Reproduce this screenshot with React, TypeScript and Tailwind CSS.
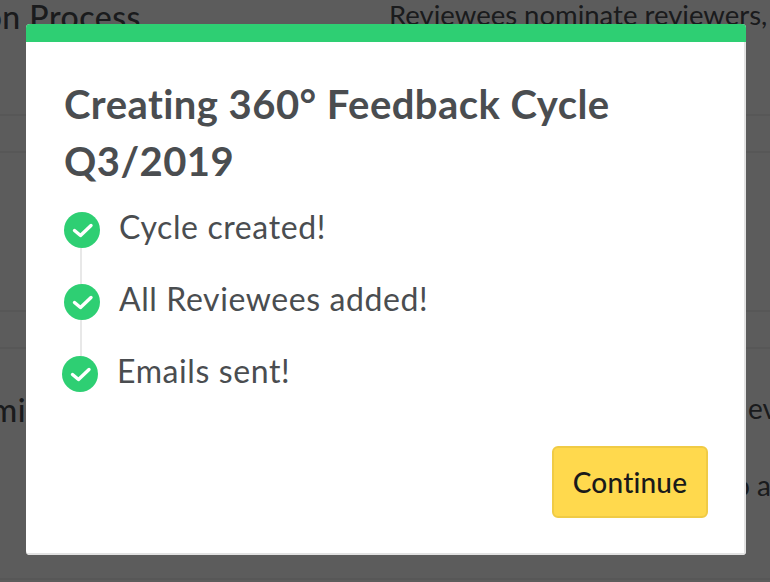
const font = "font-['Lato','Liberation_Sans',sans-serif]";

function StepIcon() {
    return (
        <svg width="36" height="36" viewBox="0 0 36 36" className="block shrink-0">
            <circle cx="18" cy="18" r="18" fill="#2ecf73" />
            <path d="M10.5 18.5L16.5 23.5L27 13.5" fill="none" stroke="#fff" strokeWidth="3.4" strokeLinecap="round" strokeLinejoin="round" />
        </svg>
    );
}

function Step({ label, last }: { label: string; last?: boolean }) {
    return (
        <div className={`flex flex-col ${last ? '-ml-[2px]' : ''}`}>
            <div className="flex items-center h-[36px]">
                <StepIcon />
                <span className="ml-[19px] text-[32px] tracking-[0.6px] leading-[32px] -mt-[7px] text-[#4a4d50] whitespace-nowrap">{label}</span>
            </div>
            {!last && <div className="ml-[16px] w-[2px] h-[36px] bg-[#e8e8e8]" />}
        </div>
    );
}

export default function App() {
    return (
        <div className={`relative w-[770px] h-[582px] overflow-hidden bg-white text-[#4a4d50] ${font}`}>
            {/* Page behind the dialog */}
            <div className="flex flex-col">
                <div className="flex h-[116px] border-b-2 border-[#f2f2f2]">
                    <div className="w-[141px] shrink-0 flex justify-end whitespace-nowrap">
                        <h2 className="text-[32px] tracking-[0.5px] leading-[34px] font-medium">Nomination Process</h2>
                    </div>
                    <p className="ml-[248px] text-[27.5px] leading-[30px] whitespace-nowrap">Reviewees nominate reviewers,</p>
                </div>
                <div className="h-[37px] border-b-2 border-[#f2f2f2]" />
                <div className="h-[159px] border-b-2 border-[#f2f2f2]" />
                <div className="h-[37px] border-b-2 border-[#f2f2f2]" />
                <div className="flex h-[231px] pt-[44px] border-b-2 border-[#f2f2f2]">
                    <div className="w-[26px] shrink-0 flex justify-end whitespace-nowrap">
                        <h2 className="text-[32px] tracking-[0.5px] leading-[34px] font-medium">Admi</h2>
                    </div>
                    <div className="ml-[720px] whitespace-nowrap text-[28px] leading-[30px]">
                        <p className="ml-[2px]">ev</p>
                        <p className="mt-[47px] -ml-[12px]">o a</p>
                    </div>
                </div>
            </div>

            {/* Overlay */}
            <div className="absolute inset-0 bg-black/64 pl-[26px] pt-[24px]">
                <div className="w-[720px] h-[531px] rounded-[4px] overflow-hidden bg-white flex flex-col">
                    <div className="h-[18px] shrink-0 bg-[#2ecf73]" />
                    <div className="flex-1 flex flex-col pl-[38px] pr-[36px] border-r-2 border-b-2 border-[#e2e2e2]">
                        <h1 className="mt-[34px] text-[40px] tracking-[0.45px] leading-[57px] font-bold text-[#4a4d50] whitespace-nowrap">
                            Creating 360° Feedback Cycle<br />Q3/2019
                        </h1>
                        <div className="mt-[22px] flex flex-col">
                            <Step label="Cycle created!" />
                            <Step label="All Reviewees added!" />
                            <Step label="Emails sent!" last />
                        </div>
                        <div className="mt-[54px] flex justify-end">
                            <button className="w-[156px] h-[72px] rounded-[6px] bg-[#ffd94d] border-2 border-[#f0cb45] text-[28px] tracking-[0.2px] font-medium text-[#1a1a1a]">
                                Continue
                            </button>
                        </div>
                    </div>
                </div>
            </div>
        </div>
    );
}
